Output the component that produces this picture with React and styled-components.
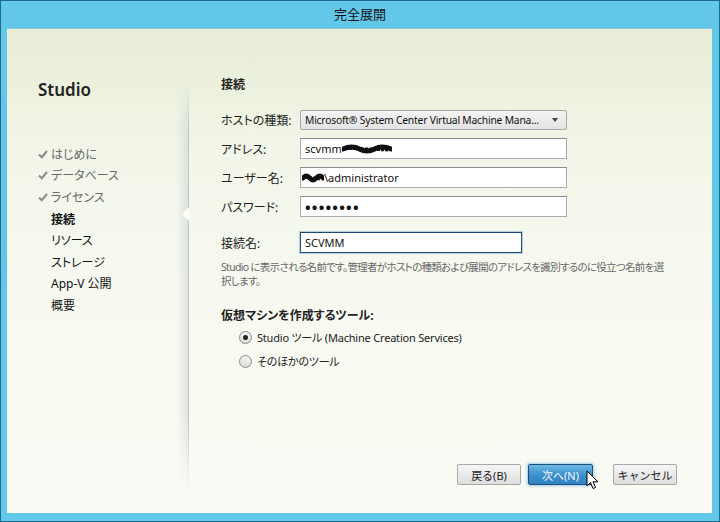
import React from "react";
import styled, { createGlobalStyle, css } from "styled-components";

const GlobalStyle = createGlobalStyle`
  html, body { margin: 0; padding: 0; }
  body {
    font-family: "Noto Sans", "Noto Sans CJK JP", sans-serif;
    font-feature-settings: "palt";
  }
`;

const Frame = styled.div`
  width: 720px;
  height: 522px;
  box-sizing: border-box;
  background: #63c7ea;
  border: 1px solid #1d6a90;
  display: flex;
  flex-direction: column;
  overflow: hidden;
`;

const TitleBar = styled.div`
  height: 27px;
  display: flex;
  align-items: center;
  justify-content: center;
  font-size: 13px;
  color: #111;
  padding-bottom: 2px;
  box-sizing: border-box;
`;

const Content = styled.div`
  flex: 1;
  min-height: 0;
  margin: 0 7px 8px 6px;
  display: flex;
  background: linear-gradient(to bottom, #e7edd6 0%, #f2f6e8 25%, #f8faf2 60%, #f9fbf4 100%);
  border-top: 1px solid #8fc7d9;
`;

const Sidebar = styled.div`
  width: 169px;
  flex-shrink: 0;
  box-sizing: border-box;
  padding: 51px 0 0 31px;
  display: flex;
  flex-direction: column;
`;

const Brand = styled.div`
  font-size: 17px;
  font-weight: 600;
  color: #222;
  line-height: 20px;
`;

const NavList = styled.ul`
  list-style: none;
  margin: 43px 0 0;
  padding: 0;
`;

const NavItem = styled.li`
  display: flex;
  align-items: center;
  height: 21.6px;
  font-size: 12px;
  color: ${(p) => (p.$done ? "#6a6a6a" : "#111")};
  font-weight: ${(p) => (p.$current ? 700 : 400)};
  padding-left: ${(p) => (p.$done ? 0 : 13)}px;
`;

const CheckMark = styled.svg`
  width: 10px;
  height: 10px;
  margin-right: 3px;
`;

const Divider = styled.div`
  width: 12px;
  flex-shrink: 0;
  margin: 52px 0 22px;
  position: relative;
  background: linear-gradient(to right, rgba(190, 195, 205, 0), rgba(190, 195, 205, 0.4));
  border-right: 1px solid #bfc3cb;
  -webkit-mask-image: linear-gradient(to bottom, transparent 0%, #000 12%, #000 82%, transparent 100%);
  mask-image: linear-gradient(to bottom, transparent 0%, #000 12%, #000 82%, transparent 100%);
`;

const Notch = styled.div`
  position: absolute;
  right: -1px;
  top: 126px;
  width: 0;
  height: 0;
  border-top: 7px solid transparent;
  border-bottom: 7px solid transparent;
  border-right: 7px solid #fbfcf7;
`;

const Main = styled.div`
  flex: 1;
  min-width: 0;
  display: flex;
  flex-direction: column;
  padding: 48px 35px 28px 32px;
  font-size: 12px;
  color: #222;
`;

const Heading = styled.div`
  font-weight: 700;
  font-size: 12px;
  line-height: 16px;
`;

const FormGrid = styled.div`
  display: grid;
  grid-template-columns: 79px 267px;
  row-gap: 8px;
  align-items: center;
  margin-top: 17px;
`;

const Label = styled.div`
  font-size: 12px;
  color: #222;
`;

const boxBase = css`
  box-sizing: border-box;
  display: flex;
  align-items: center;
  font-size: 11px;
  color: #111;
  padding: 0 4px;
`;

const Select = styled.div`
  ${boxBase}
  height: 20px;
  background: linear-gradient(to bottom, #f3f3f3, #e3e3e3);
  border: 1px solid #a8a8a8;
  border-radius: 2px;
  font-size: 10.3px;
  letter-spacing: -0.2px;
  justify-content: space-between;
  white-space: nowrap;
`;

const SelectText = styled.span`
  min-width: 0;
`;

const Caret = styled.span`
  flex-shrink: 0;
  width: 0;
  height: 0;
  border-left: 3.5px solid transparent;
  border-right: 3.5px solid transparent;
  border-top: 4px solid #444;
  margin: 0 4px 0 4px;
`;

const Field = styled.div`
  ${boxBase}
  height: 21px;
  width: ${(p) => p.$width || "100%"};
  background: #fff;
  border: 1px solid ${(p) => (p.$focused ? "#24527e" : "#a9abb0")};
  border-top-color: ${(p) => (p.$focused ? "#1d4670" : "#8a8c91")};
  box-shadow: ${(p) => (p.$focused ? "0 0 0 1px rgba(60,130,190,0.35)" : "none")};
  white-space: nowrap;
`;

const Dots = styled.span`
  font-size: 15px;
  letter-spacing: 1.2px;
  font-weight: 700;
`;

const NameRow = styled.div`
  display: grid;
  grid-template-columns: 79px auto;
  align-items: center;
  margin-top: 15px;
`;

const Help = styled.p`
  margin: 8px 0 0;
  font-size: 10.5px;
  line-height: 13.5px;
  color: #686868;
  letter-spacing: -0.7px;
  white-space: nowrap;
`;

const SubHeading = styled.div`
  margin-top: 20px;
  font-weight: 700;
  font-size: 12px;
  line-height: 16px;
`;

const RadioGroup = styled.div`
  margin: 1px 0 0 18px;
  display: flex;
  flex-direction: column;
`;

const RadioRow = styled.label`
  display: flex;
  align-items: center;
  height: 24px;
  font-size: 11px;
  letter-spacing: -0.2px;
  color: #222;
`;

const RadioDot = styled.span`
  width: 11px;
  height: 11px;
  border-radius: 50%;
  border: 1px solid #8a8a8a;
  background: linear-gradient(to bottom, #f4f4f4, #dcdcdc);
  margin-right: 5px;
  display: flex;
  align-items: center;
  justify-content: center;
  &::after {
    content: "";
    width: 5px;
    height: 5px;
    border-radius: 50%;
    background: ${(p) => (p.$on ? "#222" : "transparent")};
  }
`;

const ButtonBar = styled.div`
  margin-top: auto;
  display: flex;
  justify-content: flex-end;
  align-items: center;
  position: relative;
`;

const Button = styled.button`
  width: 64px;
  height: 21px;
  box-sizing: border-box;
  font-family: inherit;
  font-size: 11px;
  padding: 0;
  margin-left: ${(p) => p.$gap || 0}px;
  border-radius: 2px;
  cursor: default;
  ${(p) =>
    p.$primary
      ? css`
          width: 65px;
          color: #f4f9fd;
          background: linear-gradient(to bottom, #6cb8e6, #3a8fcb 55%, #2f84c2);
          border: 1px solid #1e4f7a;
          box-shadow: 0 0 3px 1px rgba(80, 160, 220, 0.55);
        `
      : css`
          color: #222;
          background: linear-gradient(to bottom, #f6f6f6, #dedede);
          border: 1px solid #a7a7a7;
        `}
`;

const Pointer = styled.svg`
  position: absolute;
  right: 78px;
  top: 6px;
  width: 13px;
  height: 20px;
`;

function Scribble({ width }) {
  return (
    <svg width={width} height="10" viewBox={`0 0 ${width} 10`} style={{ display: "block", flexShrink: 0 }}>
      <path
        d={`M1 5 Q ${width * 0.2} 1 ${width * 0.35} 5 T ${width * 0.65} 5 T ${width - 1} 5`}
        stroke="#111"
        strokeWidth="5"
        fill="none"
        strokeLinecap="round"
      />
      <path
        d={`M3 4 L ${width - 4} 6`}
        stroke="#111"
        strokeWidth="3"
        fill="none"
        strokeDasharray="3 1"
      />
    </svg>
  );
}

const steps = [
  { label: "はじめに", done: true },
  { label: "データベース", done: true },
  { label: "ライセンス", done: true },
  { label: "接続", current: true },
  { label: "リソース" },
  { label: "ストレージ" },
  { label: "App-V 公開" },
  { label: "概要" },
];

export default function App() {
  return (
    <>
      <GlobalStyle />
      <Frame>
        <TitleBar>完全展開</TitleBar>
        <Content>
          <Sidebar>
            <Brand>Studio</Brand>
            <NavList>
              {steps.map((s) => (
                <NavItem key={s.label} $done={s.done} $current={s.current}>
                  {s.done && (
                    <CheckMark viewBox="0 0 10 10">
                      <path d="M1 5.5 L3.8 8.2 L9 2" stroke="#8a8a8a" strokeWidth="2" fill="none" />
                    </CheckMark>
                  )}
                  {s.label}
                </NavItem>
              ))}
            </NavList>
          </Sidebar>
          <Divider>
            <Notch />
          </Divider>
          <Main>
            <Heading>接続</Heading>
            <FormGrid>
              <Label>ホストの種類:</Label>
              <Select>
                <SelectText>Microsoft® System Center Virtual Machine Mana...</SelectText>
                <Caret />
              </Select>
              <Label>アドレス:</Label>
              <Field>
                scvmm
                <Scribble width={50} />
              </Field>
              <Label>ユーザー名:</Label>
              <Field style={{ paddingLeft: 1 }}>
                <Scribble width={22} />
                \administrator
              </Field>
              <Label>パスワード:</Label>
              <Field>
                <Dots>••••••••</Dots>
              </Field>
            </FormGrid>
            <NameRow>
              <Label>接続名:</Label>
              <Field $width="222px" $focused>
                SCVMM
              </Field>
            </NameRow>
            <Help>
              Studio に表示される名前です。管理者がホストの種類および展開のアドレスを識別するのに役立つ名前を選
              <br />
              択します。
            </Help>
            <SubHeading>仮想マシンを作成するツール:</SubHeading>
            <RadioGroup>
              <RadioRow>
                <RadioDot $on />
                Studio ツール (Machine Creation Services)
              </RadioRow>
              <RadioRow>
                <RadioDot />
                そのほかのツール
              </RadioRow>
            </RadioGroup>
            <ButtonBar>
              <Button>戻る(B)</Button>
              <Button $primary $gap={7}>
                次へ(N)
              </Button>
              <Button $gap={20}>キャンセル</Button>
              <Pointer viewBox="0 0 13 20">
                <path
                  d="M1 1 L1 16 L4.5 12.5 L7 18.5 L9.5 17.5 L7 11.8 L12 11.8 Z"
                  fill="#fff"
                  stroke="#000"
                  strokeWidth="1"
                  strokeLinejoin="round"
                />
              </Pointer>
            </ButtonBar>
          </Main>
        </Content>
      </Frame>
    </>
  );
}
